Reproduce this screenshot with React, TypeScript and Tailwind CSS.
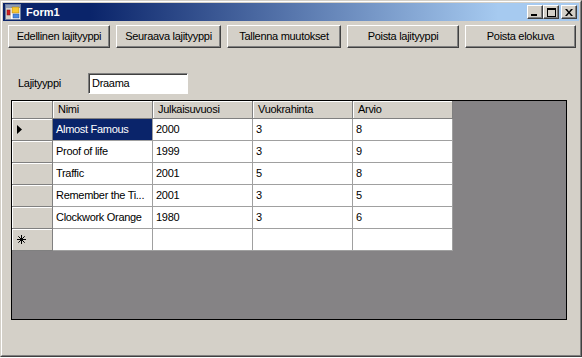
import React from 'react';

const rows = [
  { nimi: 'Almost Famous', vuosi: '2000', hinta: '3', arvio: '8' },
  { nimi: 'Proof of life', vuosi: '1999', hinta: '3', arvio: '9' },
  { nimi: 'Traffic', vuosi: '2001', hinta: '5', arvio: '8' },
  { nimi: 'Remember the Ti...', vuosi: '2001', hinta: '3', arvio: '5' },
  { nimi: 'Clockwork Orange', vuosi: '1980', hinta: '3', arvio: '6' },
];

const buttons = [
  { label: 'Edellinen lajityyppi', w: 'w-[102px]' },
  { label: 'Seuraava lajityyppi', w: 'w-[105px]' },
  { label: 'Tallenna muutokset', w: 'w-[114px]' },
  { label: 'Poista lajityyppi', w: 'w-[112px]' },
  { label: 'Poista elokuva', w: 'w-[111px]' },
];

function AppIcon() {
  return (
    <svg width="16" height="16" viewBox="0 0 16 16">
      <rect x="0.5" y="0.5" width="15" height="15" fill="#ffffff" stroke="#6b7b9c" />
      <rect x="1" y="1" width="14" height="3" fill="#8c9cb8" />
      <rect x="1" y="4" width="5" height="11" fill="#d4d0c8" />
      <rect x="2" y="6" width="3" height="5" fill="#d02020" stroke="#801010" strokeWidth="0.5" />
      <rect x="7" y="3" width="7" height="6" fill="#f8c830" stroke="#a07810" strokeWidth="0.5" />
      <rect x="8" y="10" width="6" height="4" fill="#4a8ae0" stroke="#2050a0" strokeWidth="0.5" />
    </svg>
  );
}

function CaptionButton({ kind }: { kind: 'min' | 'max' | 'close' }) {
  return (
    <div className="w-[16px] h-[14px] bg-[#d4d0c8] border-t border-l border-white border-r border-b border-r-[#404040] border-b-[#404040] shadow-[inset_-1px_-1px_0_#808080] flex items-center justify-center">
      {kind === 'min' && (
        <svg width="8" height="8" viewBox="0 0 8 8">
          <rect x="0" y="6" width="6" height="2" fill="#000" />
        </svg>
      )}
      {kind === 'max' && (
        <svg width="9" height="9" viewBox="0 0 9 9">
          <rect x="0" y="0" width="9" height="2" fill="#000" />
          <rect x="0.5" y="0.5" width="8" height="8" fill="none" stroke="#000" />
        </svg>
      )}
      {kind === 'close' && (
        <svg width="8" height="7" viewBox="0 0 8 7">
          <path d="M0 0h2l2 2.5 2-2.5h2l-3 3.5 3 3.5h-2l-2-2.5-2 2.5h-2l3-3.5z" fill="#000" />
        </svg>
      )}
    </div>
  );
}

function WinButton({ label, w }: { label: string; w: string }) {
  return (
    <div className={`${w} h-[23px] border border-t-white border-l-white border-r-[#404040] border-b-[#404040] shadow-[inset_-1px_-1px_0_#808080] bg-[#d4d0c8] flex items-center justify-center text-black`}>
      {label}
    </div>
  );
}

function HeaderCell({ children, w }: { children?: React.ReactNode; w: string }) {
  return (
    <div className={`${w} h-[18px] shrink-0 bg-[#d4d0c8] border-r border-b border-[#808080] shadow-[inset_1px_1px_0_#ffffff] flex items-center pl-[5px]`}>
      {children}
    </div>
  );
}

function RowHeader({ mark }: { mark?: 'arrow' | 'star' }) {
  return (
    <div className="w-[41px] h-[22px] shrink-0 bg-[#d4d0c8] border-r border-b border-[#808080] shadow-[inset_1px_1px_0_#ffffff] flex items-center pl-[5px]">
      {mark === 'arrow' && (
        <svg width="5" height="9" viewBox="0 0 5 9">
          <path d="M0 0l5 4.5L0 9z" fill="#000" />
        </svg>
      )}
      {mark === 'star' && (
        <svg width="9" height="9" viewBox="0 0 9 9" stroke="#000" strokeWidth="1">
          <path d="M4.5 0v9M0 4.5h9M1.3 1.3l6.4 6.4M7.7 1.3l-6.4 6.4" />
        </svg>
      )}
    </div>
  );
}

function Cell({ children, selected }: { children?: React.ReactNode; selected?: boolean }) {
  return (
    <div
      className={`w-[100px] h-[22px] shrink-0 border-r border-b border-[#a0a0a0] flex items-center px-[3px] whitespace-nowrap overflow-hidden ${
        selected ? 'bg-[#0a246a] text-white' : 'bg-white text-black'
      }`}
    >
      {children}
    </div>
  );
}

export default function App() {
  return (
    <div className="w-[582px] h-[358px] bg-white font-['Liberation_Sans',Arial,sans-serif] text-[11px] tracking-[-0.3px] text-black">
      {/* Window frame */}
      <div className="w-[582px] h-[357px] border border-t-[#d4d0c8] border-l-[#d4d0c8] border-r-[#404040] border-b-[#404040]">
        <div className="w-full h-full border border-t-white border-l-white border-r-[#808080] border-b-[#808080] bg-[#d4d0c8] p-[1px] flex flex-col">
          {/* Title bar */}
          <div className="h-[18px] shrink-0 flex items-center pl-[2px] pr-[2px] bg-[linear-gradient(to_right,#0a246a_0%,#0a246a_15%,#a6caf0_86%)]">
            <AppIcon />
            <span className="ml-[5px] text-white font-bold text-[11px] tracking-normal">Form1</span>
            <div className="ml-auto flex items-center">
              <CaptionButton kind="min" />
              <CaptionButton kind="max" />
              <div className="w-[2px]" />
              <CaptionButton kind="close" />
            </div>
          </div>

          {/* Client area */}
          <div className="flex-1 flex flex-col pl-[5px] pt-[4px]">
            <div className="flex gap-[6px]">
              {buttons.map((b) => (
                <WinButton key={b.label} label={b.label} w={b.w} />
              ))}
            </div>

            <div className="flex items-center mt-[25px] ml-[10px]">
              <span className="w-[70px]">Lajityyppi</span>
              <div className="w-[100px] h-[21px] bg-white border border-t-[#808080] border-l-[#808080] border-r-white border-b-white shadow-[inset_1px_1px_0_#404040] flex items-center px-[3px]">
                Draama
              </div>
            </div>

            {/* Data grid */}
            <div className="mt-[6px] ml-[3px] w-[556px] h-[220px] border border-black bg-[#858385]">
              <div className="flex">
                <HeaderCell w="w-[41px]" />
                <HeaderCell w="w-[100px]">Nimi</HeaderCell>
                <HeaderCell w="w-[100px]">Julkaisuvuosi</HeaderCell>
                <HeaderCell w="w-[100px]">Vuokrahinta</HeaderCell>
                <HeaderCell w="w-[100px]">Arvio</HeaderCell>
              </div>
              {rows.map((r, i) => (
                <div key={r.nimi} className="flex">
                  <RowHeader mark={i === 0 ? 'arrow' : undefined} />
                  <Cell selected={i === 0}>{r.nimi}</Cell>
                  <Cell>{r.vuosi}</Cell>
                  <Cell>{r.hinta}</Cell>
                  <Cell>{r.arvio}</Cell>
                </div>
              ))}
              <div className="flex">
                <RowHeader mark="star" />
                <Cell />
                <Cell />
                <Cell />
                <Cell />
              </div>
            </div>
          </div>
        </div>
      </div>
    </div>
  );
}
